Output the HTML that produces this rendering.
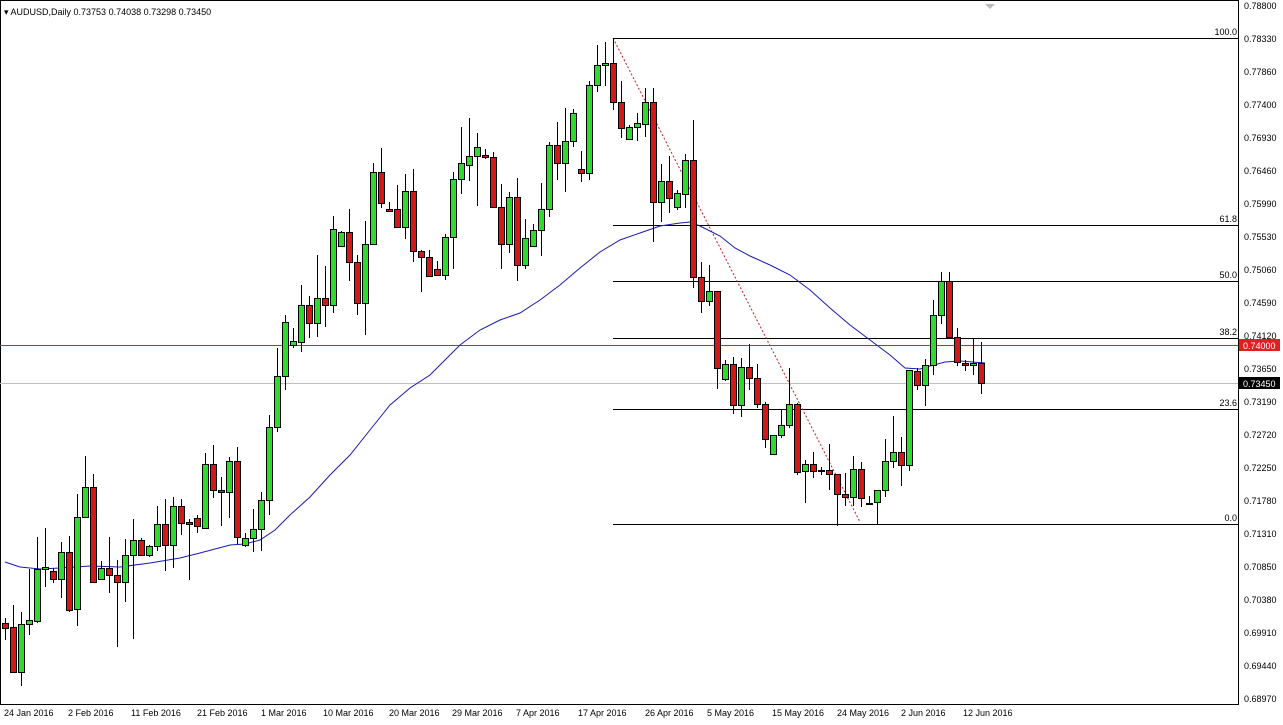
<!DOCTYPE html>
<html><head><meta charset="utf-8"><style>
html,body{margin:0;padding:0;background:#fff;}
body{width:1283px;height:725px;overflow:hidden;position:relative;font-family:"Liberation Sans",sans-serif;}
svg{position:absolute;left:0;top:0;}
</style></head><body>
<svg id="c" width="1283" height="725" xmlns="http://www.w3.org/2000/svg" font-family="Liberation Sans, sans-serif" font-size="10">
<rect x="0" y="0" width="1283" height="725" fill="#fff"/>
<rect x="0.5" y="0.5" width="1238" height="704" fill="none" stroke="#000"/>
<line x1="0" y1="345.5" x2="1238" y2="345.5" stroke="#e02020"/>
<line x1="0" y1="383.5" x2="1238" y2="383.5" stroke="#c0c0c0"/>
<g stroke="#000" stroke-width="1">
<line x1="613" y1="38.5" x2="1238" y2="38.5"/>
<line x1="613" y1="225.5" x2="1238" y2="225.5"/>
<line x1="613" y1="281.5" x2="1238" y2="281.5"/>
<line x1="613" y1="338.5" x2="1238" y2="338.5"/>
<line x1="613" y1="409.5" x2="1238" y2="409.5"/>
<line x1="613" y1="524.5" x2="1238" y2="524.5"/>
</g>
<g font-size="9" fill="#000" text-anchor="end">
<text x="1237" y="35">100.0</text>
<text x="1237" y="222">61.8</text>
<text x="1237" y="278">50.0</text>
<text x="1237" y="335">38.2</text>
<text x="1237" y="406">23.6</text>
<text x="1237" y="521">0.0</text>
</g>
<line x1="613" y1="38" x2="860" y2="522" stroke="#c02020" stroke-dasharray="2,2"/>
<polyline fill="none" stroke="#1a1ab0" stroke-width="1" points="5,562 20,567 40,569 60,568 90,566 120,567 150,563 180,558 200,553 230,545 245,544 260,540 275,530 290,515 310,497 330,475 350,455 370,430 390,405 410,388 430,375 445,360 460,345 480,330 500,320 520,313 540,300 560,285 580,268 600,252 620,240 640,233 660,226 680,223 690,222 700,226 720,236 735,248 750,256 770,265 790,275 810,290 830,308 850,325 870,340 890,355 905,368 920,369 930,366 945,362 960,361 985,363"/>
<g id="cs"></g>
<g font-size="9" fill="#000">
<text x="1244" y="9">0.78800</text>
<text x="1244" y="42">0.78330</text>
<text x="1244" y="75">0.77860</text>
<text x="1244" y="108">0.77400</text>
<text x="1244" y="141">0.76930</text>
<text x="1244" y="174">0.76460</text>
<text x="1244" y="207">0.75990</text>
<text x="1244" y="240">0.75530</text>
<text x="1244" y="273">0.75060</text>
<text x="1244" y="306">0.74590</text>
<text x="1244" y="339">0.74120</text>
<text x="1244" y="372">0.73650</text>
<text x="1244" y="405">0.73190</text>
<text x="1244" y="438">0.72720</text>
<text x="1244" y="471">0.72250</text>
<text x="1244" y="504">0.71780</text>
<text x="1244" y="537">0.71310</text>
<text x="1244" y="570">0.70850</text>
<text x="1244" y="603">0.70380</text>
<text x="1244" y="636">0.69910</text>
<text x="1244" y="669">0.69440</text>
<text x="1244" y="702">0.68970</text>
</g>
<rect x="1239" y="339" width="41" height="12" fill="#e02020"/>
<text x="1243" y="349" font-size="9" fill="#fff">0.74000</text>
<rect x="1239" y="377" width="41" height="12" fill="#000"/>
<text x="1243" y="387" font-size="9" fill="#fff">0.73450</text>
<g font-size="9" fill="#000">
<text x="4" y="716">24 Jan 2016</text>
<text x="68" y="716">2 Feb 2016</text>
<text x="131" y="716">11 Feb 2016</text>
<text x="197" y="716">21 Feb 2016</text>
<text x="261" y="716">1 Mar 2016</text>
<text x="323" y="716">10 Mar 2016</text>
<text x="389" y="716">20 Mar 2016</text>
<text x="452" y="716">29 Mar 2016</text>
<text x="516" y="716">7 Apr 2016</text>
<text x="578" y="716">17 Apr 2016</text>
<text x="645" y="716">26 Apr 2016</text>
<text x="707" y="716">5 May 2016</text>
<text x="772" y="716">15 May 2016</text>
<text x="837" y="716">24 May 2016</text>
<text x="901" y="716">2 Jun 2016</text>
<text x="963" y="716">12 Jun 2016</text>
</g>
<text x="4" y="15" font-size="9" fill="#000">▾ AUDUSD,Daily  0.73753 0.74038 0.73298 0.73450</text>
<polygon points="985,4 995,4 990,9" fill="#bbb"/>
</svg>
<script>
var d=[
[5,'R',623,628,618,640],[13,'R',627,672,605,673],[21,'G',624,672,612,686],[29,'G',620,624,569,635],[37,'G',569,621,537,623],
[45,'G',567,569,528,587],[53,'R',571,579,568,583],[61,'G',552,579,542,598],[69,'R',552,610,536,612],[77,'G',517,609,494,626],
[85,'G',487,517,456,517],[93,'R',487,582,474,583],[101,'G',568,579,561,580],[109,'R',568,575,537,593],[117,'R',575,582,560,647],
[125,'G',555,582,539,602],[133,'G',540,555,519,639],[141,'R',540,555,538,550],[149,'G',546,555,545,557],[157,'G',524,546,506,551],
[165,'R',524,545,499,571],[173,'G',506,545,497,568],[181,'R',506,523,499,535],[189,'R',522,524,519,580],[197,'R',518,526,515,533],
[205,'G',464,528,453,529],[213,'R',464,490,445,498],[221,'R',490,492,477,526],[229,'G',461,492,457,518],[237,'R',461,537,447,544],
[245,'G',538,545,533,547],[253,'G',529,538,509,552],[261,'G',500,529,492,551],[269,'G',427,500,415,515],[277,'G',376,427,348,432],
[285,'G',322,376,315,390],[293,'G',341,345,328,348],[301,'G',305,342,285,352],[309,'R',305,323,296,338],[317,'G',298,323,255,337],
[325,'R',298,305,266,327],[333,'G',229,305,216,313],[341,'G',232,246,231,247],[349,'R',232,262,209,281],[357,'R',262,303,255,315],
[365,'G',244,303,221,335],[373,'G',172,244,163,245],[381,'R',172,203,148,208],[389,'R',209,211,202,212],[397,'R',209,227,185,227],
[405,'G',191,227,174,239],[413,'R',191,251,169,262],[421,'R',251,257,250,292],[429,'R',257,276,250,277],[437,'R',269,275,261,276],
[445,'G',237,275,234,280],[453,'G',179,237,172,269],[461,'G',163,179,127,194],[469,'G',156,165,118,181],[477,'G',147,156,133,206],
[485,'R',155,157,149,159],[493,'R',157,207,152,208],[501,'R',207,244,184,269],[509,'G',197,244,192,253],[517,'R',197,265,178,281],
[525,'G',238,265,219,269],[533,'G',230,246,224,247],[541,'G',209,230,183,256],[549,'G',145,209,142,217],[557,'R',145,163,122,180],
[565,'G',141,163,108,192],[573,'G',113,141,109,147],[581,'R',169,173,151,182],[589,'G',85,173,81,180],[597,'G',65,85,45,92],
[605,'G',63,65,42,86],[613,'R',63,102,38,110],[621,'R',102,128,81,138],[629,'G',127,139,125,140],[637,'G',123,127,113,141],
[645,'G',102,124,88,137],[653,'R',102,202,88,242],[661,'G',181,202,164,222],[669,'R',181,198,156,213],[677,'G',193,207,190,210],
[685,'G',160,194,154,208],[693,'R',160,277,120,288],[701,'R',277,301,262,313],[709,'G',291,301,265,306],[717,'R',291,368,291,389],
[725,'G',364,379,360,381],[733,'R',364,405,357,414],[741,'G',367,405,358,417],[749,'R',367,378,344,390],[757,'R',378,404,364,408],
[765,'R',404,439,402,448],[773,'G',435,454,435,455],[781,'G',425,435,409,438],[789,'G',404,425,368,428],[797,'R',404,472,403,475],
[805,'G',464,471,460,503],[813,'R',464,471,452,478],[821,'R',470,471,467,475],[829,'R',470,474,444,490],[837,'R',474,494,474,526],
[845,'R',494,497,473,506],[853,'G',469,497,456,506],[861,'R',469,498,462,507],[869,'R',503,504,496,504],[877,'G',490,502,490,525],
[885,'G',461,490,439,497],[893,'G',452,461,416,468],[901,'R',452,465,437,486],[909,'G',370,465,370,471],[917,'R',371,385,368,390],
[925,'G',365,385,359,406],[933,'G',315,365,300,375],[941,'G',281,315,272,324],[949,'R',281,337,272,337],[957,'R',337,362,328,366],
[965,'R',363,365,360,371],[973,'G',363,365,339,375],[981,'R',363,383,342,394]
];
var s='';
d.forEach(function(c){var x=c[0],t=c[2],b=c[3],h=c[4],l=c[5];
s+='<line x1="'+(x+0.5)+'" y1="'+h+'" x2="'+(x+0.5)+'" y2="'+l+'" stroke="#000"/>';
var hh=Math.max(b-t,1);
s+='<rect x="'+(x-2.5)+'" y="'+(t+0.5)+'" width="6" height="'+hh+'" fill="'+(c[1]=='G'?'#2edc2e':'#d41818')+'" stroke="#000" stroke-width="1"/>';});
document.getElementById('cs').innerHTML=s;
</script>
</body></html>
